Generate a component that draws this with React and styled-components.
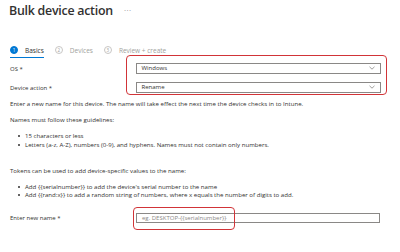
import styled, { createGlobalStyle } from "styled-components";

const GlobalStyle = createGlobalStyle`
  body {
    margin: 0;
    background: #ffffff;
    font-family: "Open Sans", "Noto Sans", sans-serif;
    color: #323130;
  }
`;

const Page = styled.div`
  width: 400px;
  height: 252px;
  padding: 0 13px 0 10px;
  box-sizing: border-box;
  overflow: hidden;
`;

const Header = styled.header`
  display: flex;
  align-items: center;
  gap: 11px;
  height: 21px;
  margin-left: -1px;
`;

const Title = styled.h1`
  margin: 0;
  font-size: 12.4px;
  font-weight: 600;
  letter-spacing: -0.25px;
  color: #323130;
`;

const More = styled.span`
  color: #8a8886;
  font-size: 8px;
  letter-spacing: 0.5px;
  margin-top: -2px;
`;

const Steps = styled.nav`
  display: flex;
  align-items: flex-end;
  gap: 11px;
  margin-top: 23px;
`;

const Step = styled.div`
  display: flex;
  align-items: center;
  gap: 7px;
  height: 12px;
  padding: 0 0 1px;
  border-bottom: 1.5px solid ${(p) => (p.$active ? "#0078d4" : "transparent")};
  color: ${(p) => (p.$active ? "#323130" : "#a19f9d")};
  font-size: 6.5px;
`;

const StepNum = styled.span`
  display: flex;
  align-items: center;
  justify-content: center;
  width: 8px;
  height: 8px;
  box-sizing: border-box;
  border-radius: 50%;
  font-size: 4.5px;
  background: ${(p) => (p.$active ? "#0078d4" : "transparent")};
  color: ${(p) => (p.$active ? "#ffffff" : "#a19f9d")};
  border: 0.7px solid ${(p) => (p.$active ? "#0078d4" : "#c8c6c4")};
`;

const FieldBlock = styled.div`
  display: grid;
  grid-template-columns: 116px 1fr;
  margin-top: -3px;
`;

const LabelStack = styled.div`
  display: flex;
  flex-direction: column;
  gap: 8px;
  padding-top: 8px;
`;

const Label = styled.label`
  display: flex;
  align-items: center;
  height: 11px;
  font-size: 6px;
  color: #323130;
`;

const Highlight = styled.div`
  display: flex;
  flex-direction: column;
  gap: 8px;
  padding: 6.5px 5.5px 1.5px 8.5px;
  border: 1.5px solid #d13438;
  border-radius: 4px;
`;

const Select = styled.div`
  display: flex;
  align-items: center;
  justify-content: space-between;
  height: 11px;
  box-sizing: border-box;
  padding: 0 5px 0 5px;
  border: 0.8px solid #8a8886;
  font-size: 6px;
  color: #323130;
`;

const Chevron = () => (
  <svg width="6" height="4" viewBox="0 0 6 4">
    <path d="M0.5 0.8 L3 3.2 L5.5 0.8" fill="none" stroke="#605e5c" strokeWidth="0.6" />
  </svg>
);

const Text = styled.p`
  margin: ${(p) => p.$mt || 0}px 0 0;
  font-size: 6.1px;
  line-height: 8px;
  color: #323130;
  white-space: nowrap;
`;

const List = styled.ul`
  margin: ${(p) => p.$mt || 0}px 0 0;
  padding: 0 0 0 15px;
  list-style: none;
  display: flex;
  flex-direction: column;
  gap: ${(p) => p.$gap || 0}px;
`;

const Item = styled.li`
  position: relative;
  font-size: 6.1px;
  line-height: 8px;
  white-space: nowrap;
  &::before {
    content: "";
    position: absolute;
    left: -7px;
    top: 3px;
    width: 2px;
    height: 2px;
    border-radius: 50%;
    background: #323130;
  }
`;

const NameRow = styled.div`
  display: grid;
  grid-template-columns: 126px 1fr;
  align-items: center;
  margin-top: 14px;
`;

const InputWrap = styled.div`
  position: relative;
  &::after {
    content: "";
    position: absolute;
    left: -3px;
    top: -6px;
    width: 100px;
    bottom: -7px;
    border: 1.5px solid #d13438;
    border-radius: 4px;
    pointer-events: none;
  }
`;

const Input = styled.div`
  display: flex;
  align-items: center;
  height: 10px;
  width: 244px;
  box-sizing: border-box;
  padding-left: 5px;
  border: 0.8px solid #8a8886;
  font-size: 6px;
  color: #8a8886;
`;

export default function App() {
  return (
    <>
      <GlobalStyle />
      <Page>
        <Header>
          <Title>Bulk device action</Title>
          <More>···</More>
        </Header>
        <Steps>
          <Step $active>
            <StepNum $active>1</StepNum>
            Basics
          </Step>
          <Step>
            <StepNum>2</StepNum>
            Devices
          </Step>
          <Step>
            <StepNum>3</StepNum>
            Review + create
          </Step>
        </Steps>
        <FieldBlock>
          <LabelStack>
            <Label>OS *</Label>
            <Label>Device action *</Label>
          </LabelStack>
          <Highlight>
            <Select>
              Windows
              <Chevron />
            </Select>
            <Select>
              Rename
              <Chevron />
            </Select>
          </Highlight>
        </FieldBlock>
        <Text $mt={5}>
          Enter a new name for this device. The name will take effect the next time the device checks in to Intune.
        </Text>
        <Text $mt={8}>Names must follow these guidelines:</Text>
        <List $mt={8} $gap={1}>
          <Item>15 characters or less</Item>
          <Item>Letters (a-z, A-Z), numbers (0-9), and hyphens. Names must not contain only numbers.</Item>
        </List>
        <Text $mt={17.5}>Tokens can be used to add device-specific values to the name:</Text>
        <List $mt={8}>
          <Item>Add {"{{serialnumber}}"} to add the device's serial number to the name</Item>
          <Item>Add {"{{rand:x}}"} to add a random string of numbers, where x equals the number of digits to add.</Item>
        </List>
        <NameRow>
          <Label>Enter new name *</Label>
          <InputWrap>
            <Input>eg. DESKTOP-{"{{serialnumber}}"}</Input>
          </InputWrap>
        </NameRow>
      </Page>
    </>
  );
}
